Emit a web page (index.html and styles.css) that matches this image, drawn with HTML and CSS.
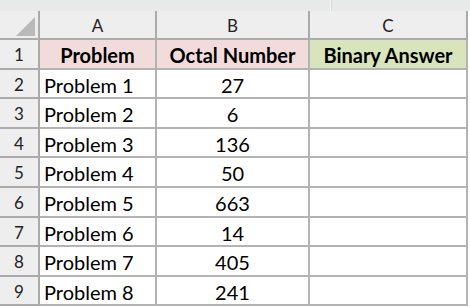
FILE: index.html
```html
<!DOCTYPE html>
<html>
<head>
<meta charset="utf-8">
<link rel="stylesheet" href="styles.css">
</head>
<body>
<div class="strip"><div class="seg seg1"></div><div class="seg seg2"></div></div>
<div class="sheet">
  <div class="hd corner"><svg class="tri" width="38" height="29" viewBox="0 0 38 29"><polygon points="35,6 35,25 16,25" fill="#b9b9b9"/></svg></div>
  <div class="hd col">A</div>
  <div class="hd col">B</div>
  <div class="hd col">C</div>

  <div class="hd rn">1</div>
  <div class="c pink b">Problem</div>
  <div class="c pink b ctr">Octal Number</div>
  <div class="c green b ctr">Binary Answer</div>

  <div class="hd rn">2</div><div class="c">Problem 1</div><div class="c ctr">27</div><div class="c"></div>
  <div class="hd rn">3</div><div class="c">Problem 2</div><div class="c ctr">6</div><div class="c"></div>
  <div class="hd rn">4</div><div class="c">Problem 3</div><div class="c ctr">136</div><div class="c"></div>
  <div class="hd rn">5</div><div class="c">Problem 4</div><div class="c ctr">50</div><div class="c"></div>
  <div class="hd rn">6</div><div class="c">Problem 5</div><div class="c ctr">663</div><div class="c"></div>
  <div class="hd rn">7</div><div class="c">Problem 6</div><div class="c ctr">14</div><div class="c"></div>
  <div class="hd rn">8</div><div class="c">Problem 7</div><div class="c ctr">405</div><div class="c"></div>
  <div class="hd rn">9</div><div class="c">Problem 8</div><div class="c ctr">241</div><div class="c"></div>
</div>
</body>
</html>
```
FILE: styles.css
```css
html, body {
  margin: 0;
  padding: 0;
  background: #ffffff;
}
body {
  width: 470px;
  height: 307px;
  overflow: hidden;
  font-family: Lato, "Open Sans", sans-serif;
  color: #000;
}
.strip {
  height: 11px;
  display: flex;
  background: #e8eaea;
}
.seg1 {
  width: 330px;
  border-right: 1px solid #f6f6f6;
}
.seg2 {
  flex: 1;
  border-left: 1px solid #d8d8d8;
}
.sheet {
  display: grid;
  grid-template-columns: 40px 117px 153px 158px;
  grid-template-rows: 29px repeat(9, 29.6px);
}
.sheet > div {
  box-sizing: border-box;
  border-right: 2px solid #b3b3b3;
  border-bottom: 2px solid #b3b3b3;
  overflow: hidden;
  white-space: nowrap;
}
.hd {
  background: #eeeeee;
  color: #222;
  font-size: 17px;
  line-height: 20px;
  text-align: center;
}
.sheet > .hd {
  border-color: #ababab;
}
.corner {
  position: relative;
}
.tri {
  display: block;
}
.col {
  padding-top: 5px;
}
.rn {
  padding-top: 5px;
}
.c {
  font-size: 20px;
  line-height: 24px;
  padding: 3px 0 0 4px;
}
.ctr {
  text-align: center;
  padding-left: 0;
}
.b {
  font-weight: bold;
  text-align: center;
  padding-left: 0;
}
.pink {
  background: #f2dcdb;
}
.green {
  background: #d8e4bc;
}
```
